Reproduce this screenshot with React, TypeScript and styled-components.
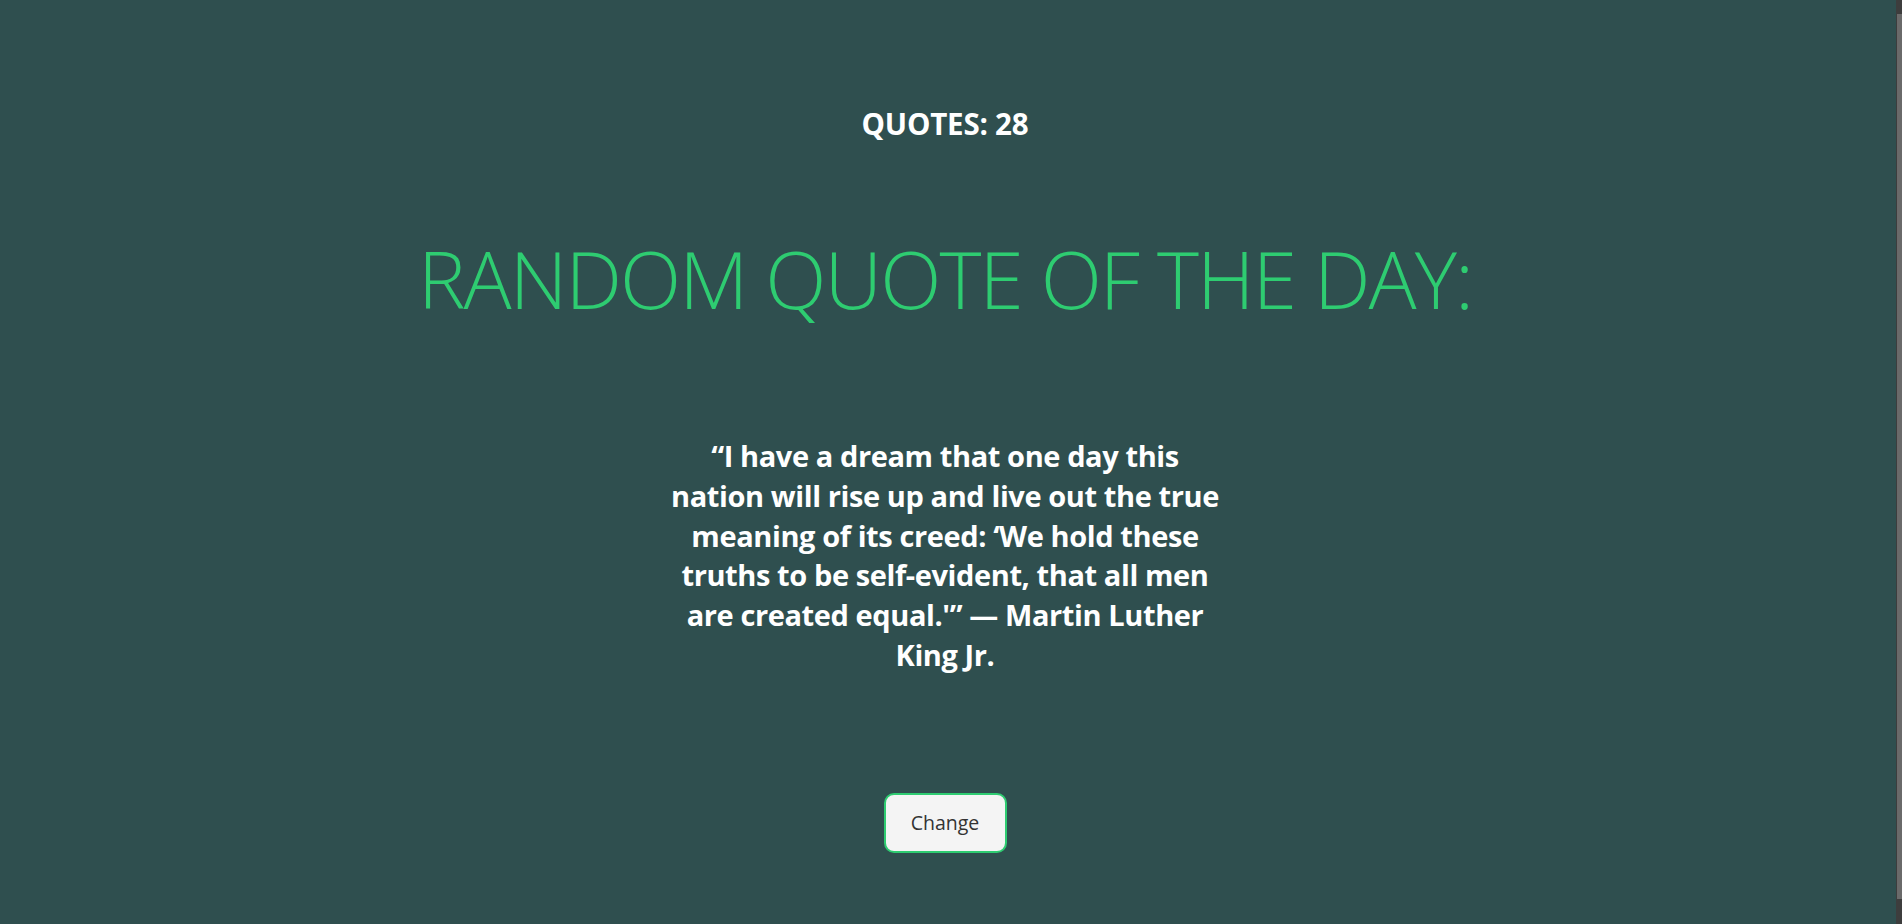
import React from "react";
import styled, { createGlobalStyle } from "styled-components";

const GlobalStyle = createGlobalStyle`
  html, body {
    margin: 0;
    padding: 0;
    background: #2f4f4f;
  }
  body {
    font-family: "Open Sans", "Noto Sans", Arial, sans-serif;
  }
`;

const Page = styled.main`
  min-height: 924px;
  box-sizing: border-box;
  display: flex;
  flex-direction: column;
  align-items: center;
  padding: 104px 12px 0 0;
`;

const Counter = styled.h2`
  margin: 0;
  font-size: 29.5px;
  line-height: 40px;
  font-weight: 700;
  color: #ffffff;
  letter-spacing: -0.2px;
`;

const Heading = styled.h1`
  margin: 84px 0 0;
  font-size: 80px;
  line-height: 100px;
  font-weight: 300;
  color: #2ecc71;
  letter-spacing: -1.9px;
  white-space: nowrap;
`;

const Quote = styled.p`
  margin: 108px 0 0;
  width: 560px;
  font-size: 29px;
  line-height: 39.8px;
  font-weight: 700;
  color: #ffffff;
  text-align: center;
  letter-spacing: -0.4px;
`;

const ChangeButton = styled.button`
  margin-top: 118px;
  width: 123px;
  height: 60px;
  box-sizing: border-box;
  border: 2px solid #2ecc71;
  border-radius: 10px;
  background: #f4f4f4;
  color: #333333;
  font-family: "Open Sans", "Noto Sans", Arial, sans-serif;
  font-size: 19.5px;
  cursor: pointer;
`;

const ScrollTrack = styled.div`
  position: fixed;
  top: 0;
  right: 0;
  width: 6px;
  height: 100%;
  background: #3d3d3d;
  box-sizing: border-box;
  padding: 14px 0 25px 1px;
  display: flex;
`;

const ScrollThumb = styled.div`
  flex: 1;
  background: #6a6a6a;
`;

export default function App() {
  return (
    <>
      <GlobalStyle />
      <Page>
        <Counter>QUOTES: 28</Counter>
        <Heading>RANDOM QUOTE OF THE DAY:</Heading>
        <Quote>
          “I have a dream that one day this nation will rise up and live out the
          true meaning of its creed: ‘We hold these truths to be self-evident,
          that all men are created equal.'” — Martin Luther King Jr.
        </Quote>
        <ChangeButton>Change</ChangeButton>
      </Page>
      <ScrollTrack aria-hidden="true">
        <ScrollThumb />
      </ScrollTrack>
    </>
  );
}
